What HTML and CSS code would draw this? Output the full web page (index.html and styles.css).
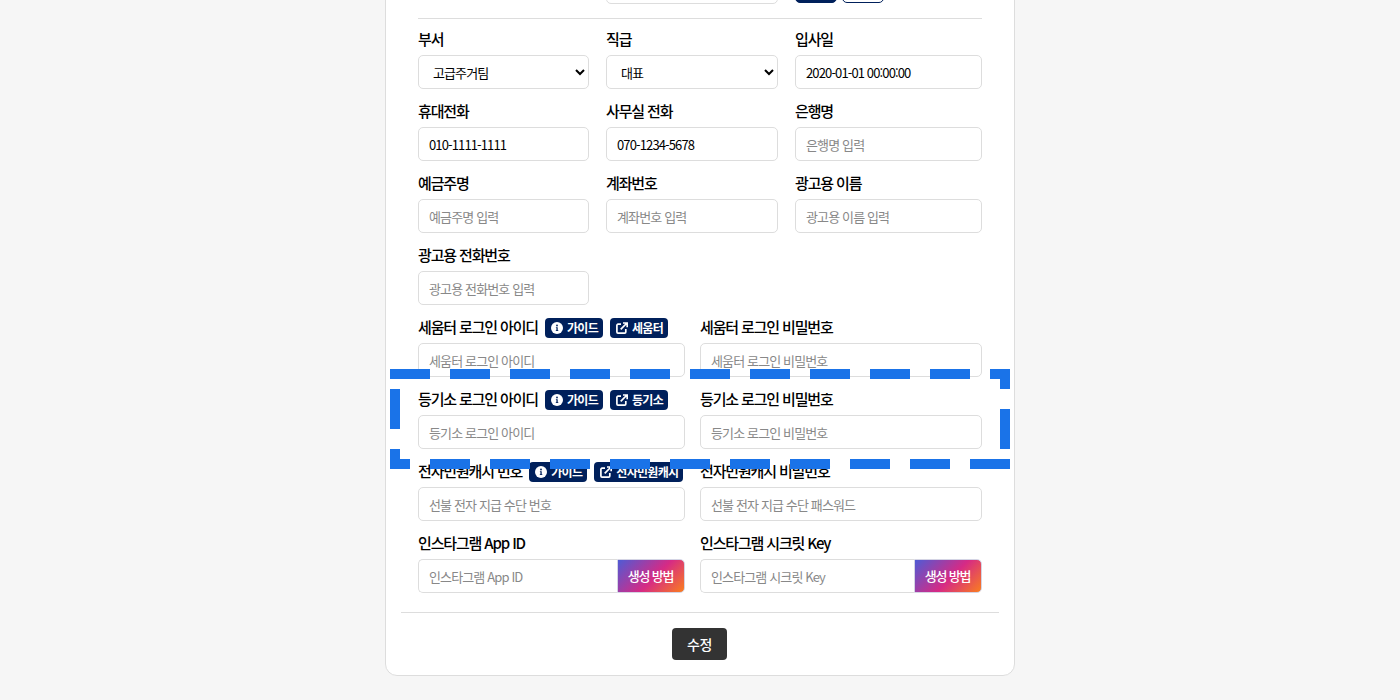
FILE: index.html
```html
<!DOCTYPE html>
<html lang="ko">
<head>
<meta charset="utf-8">
<title>직원 정보 수정</title>
<link rel="stylesheet" href="styles.css">
</head>
<body>
<main class="card">
  <div class="form">
    <div class="row row-3 row-top">
      <div></div>
      <input class="input" type="text">
      <div class="top-actions">
        <button class="top-btn top-btn-fill" type="button"></button>
        <button class="top-btn top-btn-line" type="button"></button>
      </div>
    </div>
    <hr class="rule rule-top">
    <div class="row row-3">
      <div class="field"><label class="label">부서</label>
        <select class="input select"><option>고급주거팀</option></select></div>
      <div class="field"><label class="label">직급</label>
        <select class="input select"><option>대표</option></select></div>
      <div class="field"><label class="label">입사일</label>
        <input class="input" type="text" value="2020-01-01 00:00:00"></div>
    </div>
    <div class="row row-3">
      <div class="field"><label class="label">휴대전화</label>
        <input class="input" type="text" value="010-1111-1111"></div>
      <div class="field"><label class="label">사무실 전화</label>
        <input class="input" type="text" value="070-1234-5678"></div>
      <div class="field"><label class="label">은행명</label>
        <input class="input" type="text" placeholder="은행명 입력"></div>
    </div>
    <div class="row row-3">
      <div class="field"><label class="label">예금주명</label>
        <input class="input" type="text" placeholder="예금주명 입력"></div>
      <div class="field"><label class="label">계좌번호</label>
        <input class="input" type="text" placeholder="계좌번호 입력"></div>
      <div class="field"><label class="label">광고용 이름</label>
        <input class="input" type="text" placeholder="광고용 이름 입력"></div>
    </div>
    <div class="row row-3">
      <div class="field"><label class="label">광고용 전화번호</label>
        <input class="input" type="text" placeholder="광고용 전화번호 입력"></div>
    </div>
    <div class="row row-2">
      <div class="field"><div class="label"><span>세움터 로그인 아이디</span>
          <a class="badge"><svg class="ico" viewBox="0 0 12 12"><circle cx="6" cy="6" r="6" fill="#fff"/><circle cx="6" cy="3.5" r="0.9" fill="#00205b"/><path d="M4.9 5.2H6.7V8.2H7.3V9H4.8V8.2H5.4V6H4.9Z" fill="#00205b"/></svg>가이드</a>
          <a class="badge"><svg class="ico" viewBox="0 0 12 12"><path class="ico-line" d="M5 2.2H2a1.1 1.1 0 0 0-1.1 1.1V10a1.1 1.1 0 0 0 1.1 1.1h6.700a1.100 1.100 0 0 0 1.100-1.100V7"/><path class="ico-line" d="M4.700 7.300 11 1M7 1h4.200v4.200"/></svg>세움터</a></div>
        <input class="input" type="text" placeholder="세움터 로그인 아이디"></div>
      <div class="field"><label class="label">세움터 로그인 비밀번호</label>
        <input class="input" type="text" placeholder="세움터 로그인 비밀번호"></div>
    </div>
    <div class="row row-2">
      <div class="field"><div class="label"><span>등기소 로그인 아이디</span>
          <a class="badge"><svg class="ico" viewBox="0 0 12 12"><circle cx="6" cy="6" r="6" fill="#fff"/><circle cx="6" cy="3.5" r="0.9" fill="#00205b"/><path d="M4.9 5.2H6.7V8.2H7.3V9H4.8V8.2H5.4V6H4.9Z" fill="#00205b"/></svg>가이드</a>
          <a class="badge"><svg class="ico" viewBox="0 0 12 12"><path class="ico-line" d="M5 2.2H2a1.1 1.1 0 0 0-1.1 1.1V10a1.1 1.1 0 0 0 1.1 1.1h6.700a1.100 1.100 0 0 0 1.100-1.100V7"/><path class="ico-line" d="M4.700 7.300 11 1M7 1h4.200v4.200"/></svg>등기소</a></div>
        <input class="input" type="text" placeholder="등기소 로그인 아이디"></div>
      <div class="field"><label class="label">등기소 로그인 비밀번호</label>
        <input class="input" type="text" placeholder="등기소 로그인 비밀번호"></div>
    </div>
    <div class="row row-2">
      <div class="field"><div class="label"><span>전자민원캐시 번호</span>
          <a class="badge"><svg class="ico" viewBox="0 0 12 12"><circle cx="6" cy="6" r="6" fill="#fff"/><circle cx="6" cy="3.5" r="0.9" fill="#00205b"/><path d="M4.9 5.2H6.7V8.2H7.3V9H4.8V8.2H5.4V6H4.9Z" fill="#00205b"/></svg>가이드</a>
          <a class="badge"><svg class="ico" viewBox="0 0 12 12"><path class="ico-line" d="M5 2.2H2a1.1 1.1 0 0 0-1.1 1.1V10a1.1 1.1 0 0 0 1.1 1.1h6.700a1.100 1.100 0 0 0 1.100-1.100V7"/><path class="ico-line" d="M4.700 7.300 11 1M7 1h4.200v4.200"/></svg>전자민원캐시</a></div>
        <input class="input" type="text" placeholder="선불 전자 지급 수단 번호"></div>
      <div class="field"><label class="label">전자민원캐시 비밀번호</label>
        <input class="input" type="text" placeholder="선불 전자 지급 수단 패스워드"></div>
    </div>
    <div class="row row-2">
      <div class="field"><label class="label">인스타그램 App ID</label>
        <div class="group"><input class="input group-input" type="text" placeholder="인스타그램 App ID"><button class="insta" type="button">생성 방법</button></div></div>
      <div class="field"><label class="label">인스타그램 시크릿 Key</label>
        <div class="group"><input class="input group-input" type="text" placeholder="인스타그램 시크릿 Key"><button class="insta" type="button">생성 방법</button></div></div>
    </div>
  </div>
  <hr class="rule rule-foot">
  <div class="foot"><button class="submit" type="button">수정</button></div>
</main>
<svg class="dash" width="620" height="100" viewBox="0 0 620 100"><rect x="0" y="0" width="620" height="100" fill="none" stroke="#1a73e8" stroke-width="20" stroke-dasharray="40 20"/></svg>
</body>
</html>
```

FILE: styles.css
```css
* { box-sizing: border-box; }
html, body { margin: 0; height: 700px; overflow: hidden; }
body {
  position: relative;
  display: flex;
  flex-direction: column;
  align-items: center;
  background: #f6f6f6;
  font-family: "Noto Sans CJK KR", "Noto Sans", sans-serif;
  color: #000;
}
.card {
  width: 630px;
  margin-top: -60px;
  padding: 29px 15px 15px;
  background: #fff;
  border: 1px solid #ddd;
  border-radius: 12px;
}
.form { padding: 0 17px; }
.row { display: grid; margin-bottom: 10px; }
.row-3 { grid-template-columns: 171px 172px 187px; column-gap: 17px; }
.row-2 { grid-template-columns: 267px 282px; column-gap: 15px; }
.row:last-child { margin-bottom: 0; }
.row-top { margin-bottom: 0; height: 34px; }
.top-actions { display: flex; gap: 5px; align-items: flex-start; }
.top-btn { width: 42px; height: 33px; border-radius: 5px; border: 1px solid #00205b; }
.top-btn-fill { background: #00205b; }
.top-btn-line { background: #fff; }
.rule { border: 0; height: 1px; background: #ddd; margin: 0; }
.rule-top { margin: 14px 0 8px; }
.rule-foot { margin-top: 19px; }
.field { display: flex; flex-direction: column; min-width: 0; }
.label {
  display: flex;
  align-items: center;
  height: 22px;
  padding-top: 2px;
  margin-bottom: 6px;
  font-size: 15px;
  font-weight: 500;
  line-height: 20px;
  letter-spacing: -1.15px;
  white-space: nowrap;
  color: #000;
}
.input {
  width: 100%;
  height: 34px;
  padding: 0 10px;
  background: #fff;
  border: 1px solid #ddd;
  border-radius: 5px;
  font: 400 13px "Noto Sans CJK KR", "Noto Sans", sans-serif;
  letter-spacing: -0.87px;
  color: #000;
  outline: 0;
}
.input::placeholder { color: #888; opacity: 1; }
.select { letter-spacing: -0.9px; }
.badge {
  display: inline-flex;
  align-items: center;
  gap: 4px;
  height: 20px;
  margin: 2px 0 0 7px;
  padding: 0 5px 0 6px;
  background: #00205b;
  border-radius: 4px;
  font-size: 12px;
  font-weight: 700;
  letter-spacing: -0.7px;
  color: #fff;
}
.ico { width: 12px; height: 12px; flex: none; }
.ico-line { fill: none; stroke: #fff; stroke-width: 1.7; }
.group { display: flex; height: 34px; }
.group-input { flex: 1; min-width: 0; border-radius: 5px 0 0 5px; border-right: 0; }
.insta {
  flex: none;
  width: 68px;
  padding: 0 1px 2px 0;
  border: 1px solid #d4d4e4;
  border-radius: 0 5px 5px 0;
  background: linear-gradient(135deg, #4f5bd5 0%, #d62a85 55%, #fa7e1e 100%);
  font: 500 13px "Noto Sans CJK KR", "Noto Sans", sans-serif;
  letter-spacing: -1.2px;
  color: #fff;
}
.foot { display: flex; justify-content: center; padding: 15px 1px 0 0; }
.submit {
  width: 55px;
  height: 32px;
  padding: 0;
  border: 0;
  border-radius: 4px;
  background: #333;
  font: 500 14px "Noto Sans CJK KR", "Noto Sans", sans-serif;
  letter-spacing: -0.5px;
  color: #fff;
}
.dash { position: absolute; left: 390px; top: 369px; overflow: hidden; }
```
